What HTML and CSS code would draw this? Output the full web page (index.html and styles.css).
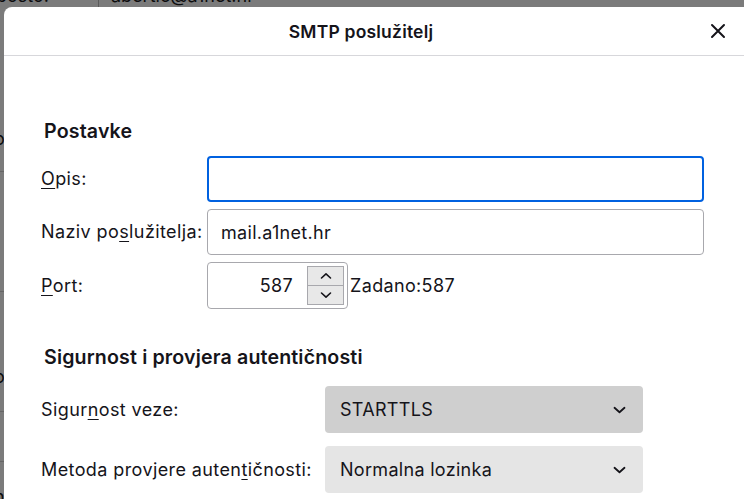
FILE: index.html
```html
<!DOCTYPE html>
<html lang="hr">
<head>
<meta charset="utf-8">
<title>SMTP poslužitelj</title>
<link rel="stylesheet" href="styles.css">
</head>
<body>
<div class="backdrop">
  <div class="bg-top">
    <span class="bg-label">posto:</span>
    <span class="bg-sep"></span>
    <span class="bg-value">abertic@a1net.hr</span>
  </div>
  <div class="bg-left">
    <span class="bg-glyph g1">i</span>
    <span class="bg-glyph g2">o</span>
    <span class="bg-line l1"></span>
    <span class="bg-line l2"></span>
    <span class="bg-glyph g3">o</span>
    <span class="bg-line l3"></span>
    <span class="bg-line l4"></span>
    <span class="bg-glyph g4">n</span>
  </div>
</div>
<div class="dialog">
  <header class="dialog-header">
    <div class="dialog-title">SMTP poslužitelj</div>
    <button class="close-btn" aria-label="Zatvori">
      <svg width="16" height="16" viewBox="0 0 16 16"><path d="M2 2 L14 14 M14 2 L2 14" stroke="#15141a" stroke-width="2" stroke-linecap="round" fill="none"/></svg>
    </button>
  </header>
  <main class="dialog-body">
    <h2 class="section-title">Postavke</h2>
    <div class="form-grid">
      <label class="field-label"><u>O</u>pis:</label>
      <div class="text-input focused"></div>

      <label class="field-label">Naziv po<u>s</u>lužitelja:</label>
      <div class="text-input">mail.a1net.hr</div>

      <label class="field-label"><u>P</u>ort:</label>
      <div class="port-row">
        <div class="port-input">
          <span class="port-value">587</span>
          <div class="spinner">
            <div class="spin-btn">
              <svg width="12" height="8" viewBox="0 0 12 8"><path d="M1.5 6 L6 1.8 L10.5 6" stroke="#15141a" stroke-width="1.6" fill="none" stroke-linecap="round" stroke-linejoin="round"/></svg>
            </div>
            <div class="spin-btn">
              <svg width="12" height="8" viewBox="0 0 12 8"><path d="M1.5 2 L6 6.2 L10.5 2" stroke="#15141a" stroke-width="1.6" fill="none" stroke-linecap="round" stroke-linejoin="round"/></svg>
            </div>
          </div>
        </div>
        <span class="default-port">Zadano:587</span>
      </div>
    </div>

    <h2 class="section-title second">Sigurnost i provjera autentičnosti</h2>
    <div class="select-grid">
      <label class="field-label">Sigur<u>n</u>ost veze:</label>
      <div class="select hover">
        <span>STARTTLS</span>
        <svg width="13" height="8" viewBox="0 0 13 8"><path d="M1.5 1.8 L6.5 6.2 L11.5 1.8" stroke="#15141a" stroke-width="1.8" fill="none" stroke-linecap="round" stroke-linejoin="round"/></svg>
      </div>

      <label class="field-label">Metoda provjere auten<u>t</u>ičnosti:</label>
      <div class="select">
        <span>Normalna lozinka</span>
        <svg width="13" height="8" viewBox="0 0 13 8"><path d="M1.5 1.8 L6.5 6.2 L11.5 1.8" stroke="#15141a" stroke-width="1.8" fill="none" stroke-linecap="round" stroke-linejoin="round"/></svg>
      </div>
    </div>
  </main>
</div>
</body>
</html>
```
FILE: styles.css
```css
* { box-sizing: border-box; }
html, body {
  margin: 0;
  height: 100%;
}
body {
  background: #7b7b7b;
  font-family: Inter, "Noto Sans", sans-serif;
  color: #15141a;
  overflow: hidden;
  position: relative;
}
u { text-decoration-thickness: 1px; text-underline-offset: 3px; }

/* dimmed page behind the modal */
.backdrop {
  position: absolute;
  inset: 0;
  color: #0c0c0d;
  font-size: 18px;
}
.bg-top {
  position: absolute;
  top: -15px;
  left: 0;
  right: 0;
  height: 22px;
  display: flex;
  align-items: flex-start;
}
.bg-label { margin-left: -4px; width: 102px; }
.bg-sep { width: 1px; height: 30px; background: #5a5a5a; }
.bg-value { margin-left: 12px; }
.bg-left {
  position: absolute;
  left: 0;
  top: 0;
  width: 4px;
  height: 100%;
  overflow: hidden;
}
.bg-glyph { position: absolute; left: -6px; }
.g1 { top: 96px; }
.g2 { top: 128px; }
.g3 { top: 366px; }
.g4 { top: 486px; }
.bg-line { position: absolute; left: 0; width: 4px; height: 1px; background: #666; }
.l1 { top: 171px; }
.l2 { top: 291px; }
.l3 { top: 411px; }
.l4 { top: 461px; }

.dialog {
  position: absolute;
  left: 4px;
  top: 7px;
  right: 0;
  bottom: 0;
  background: #fff;
  border-radius: 8px 0 0 0;
  display: flex;
  flex-direction: column;
}
.dialog-header {
  height: 49px;
  border-bottom: 1px solid #d7d7db;
  display: flex;
  align-items: center;
  justify-content: center;
  position: relative;
  flex-shrink: 0;
}
.dialog-title {
  font-size: 17.5px;
  font-weight: 600;
  letter-spacing: 0.2px;
  margin-right: 26px;
}
.close-btn {
  position: absolute;
  right: 14px;
  top: 12px;
  width: 24px;
  height: 24px;
  border: 0;
  background: transparent;
  padding: 0;
  display: flex;
  align-items: center;
  justify-content: center;
}

.dialog-body {
  padding: 62px 0 0 37px;
}
.section-title {
  margin: 0 0 12px 3px;
  font-size: 19.6px;
  font-weight: 600;
  letter-spacing: 0.15px;
  line-height: 26px;
}
.section-title.second {
  margin-top: 35px;
  margin-bottom: 16px;
}
.form-grid {
  display: grid;
  grid-template-columns: 166px 497px;
  row-gap: 7px;
  align-items: center;
}
.field-label {
  font-size: 18px;
  letter-spacing: 0.4px;
  line-height: 22px;
  white-space: nowrap;
}
.text-input {
  height: 46px;
  border: 1px solid #a8a8ad;
  border-radius: 4px;
  padding: 0 13px;
  display: flex;
  align-items: center;
  font-size: 18px;
  letter-spacing: 0.3px;
}
.text-input.focused {
  border: 2px solid #0061e0;
}
.port-row {
  display: flex;
  align-items: center;
  gap: 2px;
}
.port-input {
  width: 141px;
  height: 47px;
  border: 1px solid #a8a8ad;
  border-radius: 4px;
  display: flex;
  align-items: center;
  padding: 3px 3px 3px 0;
}
.port-value {
  flex: 1;
  text-align: right;
  padding-right: 14px;
  font-size: 18px;
  letter-spacing: 0.3px;
}
.spinner {
  width: 37px;
  height: 39px;
  border: 1px solid #a8a8ad;
  background: #e8e8e8;
  display: flex;
  flex-direction: column;
}
.spin-btn {
  flex: 1;
  display: flex;
  align-items: center;
  justify-content: center;
}
.spin-btn + .spin-btn { border-top: 1px solid #a8a8ad; }
.default-port { font-size: 18px; letter-spacing: 0.35px; }

.select-grid {
  display: grid;
  grid-template-columns: 284px 318px;
  row-gap: 13px;
  align-items: center;
}
.select {
  height: 47px;
  border-radius: 4px;
  background: #e5e5e5;
  display: flex;
  align-items: center;
  justify-content: space-between;
  padding: 0 17px 0 15px;
  font-size: 18px;
  letter-spacing: 0.3px;
}
.select.hover { background: #cfcfcf; }
```
